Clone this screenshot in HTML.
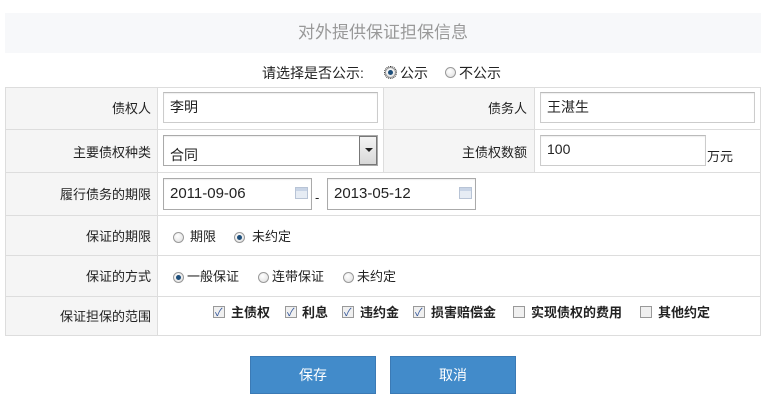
<!DOCTYPE html>
<html><head><meta charset="utf-8"><style>
*{margin:0;padding:0;box-sizing:border-box}
body{width:766px;height:405px;background:#fff;font-family:"Liberation Sans","Noto Sans CJK SC",sans-serif;font-size:13px;color:#222;position:relative;overflow:hidden}
.a{position:absolute;white-space:nowrap}
.title{left:5px;top:13px;width:756px;height:40px;background:#f7f8fa;color:#999;font-size:17px;text-align:center;line-height:40px}
.cell{position:absolute;border:1px solid #ddd}
.lab{background:#f5f5f5}
.inp{position:absolute;border:1px solid #ccc;border-top-color:#bbb;background:#fff;padding-left:6px;font-size:14px;line-height:28px;box-shadow:inset 0 1px 1px #eee}
.r{position:absolute;width:11px;height:11px;border-radius:50%;border:1px solid #999;background:radial-gradient(circle at 40% 35%,#fff,#ddd)}
.r.on::after{content:"";position:absolute;left:2px;top:2px;width:5px;height:5px;border-radius:50%;background:#1d4e7a}
.c{position:absolute;width:12px;height:12px;border:1px solid #999;background:#f0f0f0}
.c.on::after{content:"✓";position:absolute;left:1px;top:-3px;font-size:11px;color:#35579a}
.t{position:absolute;white-space:nowrap;line-height:16px}
.b{font-weight:bold}
.btn{position:absolute;top:356px;width:126px;height:38px;background:#428bca;border:1px solid #3b7ab5;color:#fff;text-align:center;line-height:36px;font-size:14px}
.cal{position:absolute;width:13px;height:12px;background:linear-gradient(#c8d4e6 0 3px,#e6ecf4 3px);border:1px solid #b8c4d6}
</style></head><body>
<div class="a title">对外提供保证担保信息</div>
<div class="t" style="left:262px;top:65px;font-size:14px">请选择是否公示:</div>
<div class="r on" style="left:385px;top:67px;outline:1px dotted #333"></div>
<div class="t" style="left:400px;top:65px;font-size:14px">公示</div>
<div class="r" style="left:445px;top:67px"></div>
<div class="t" style="left:459px;top:65px;font-size:14px">不公示</div>

<div class="cell lab" style="left:5px;top:87px;width:153px;height:249px"></div>
<div class="cell" style="left:157px;top:87px;width:604px;height:249px;border-left:none"></div>
<div class="cell lab" style="left:383px;top:87px;width:152px;height:86px"></div>
<div class="a" style="left:5px;top:129px;width:756px;height:1px;background:#ddd"></div>
<div class="a" style="left:5px;top:172px;width:756px;height:1px;background:#ddd"></div>
<div class="a" style="left:5px;top:215px;width:756px;height:1px;background:#ddd"></div>
<div class="a" style="left:5px;top:255px;width:756px;height:1px;background:#ddd"></div>
<div class="a" style="left:5px;top:296px;width:756px;height:1px;background:#ddd"></div>

<div class="t" style="right:615px;top:101px">债权人</div>
<div class="inp" style="left:163px;top:92px;width:215px;height:31px">李明</div>
<div class="t" style="right:239px;top:101px">债务人</div>
<div class="inp" style="left:540px;top:92px;width:215px;height:31px">王湛生</div>

<div class="t" style="right:615px;top:145px">主要债权种类</div>
<div class="inp" style="left:163px;top:135px;width:215px;height:31px;line-height:38px;border-color:#aaa">合同</div>
<div class="a" style="left:359px;top:136px;width:18px;height:29px;background:linear-gradient(#f4f4f4,#d8d8d8);border:1px solid #777"><div style="position:absolute;left:5px;top:11px;border-left:4px solid transparent;border-right:4px solid transparent;border-top:4px solid #222"></div></div>
<div class="t" style="right:239px;top:145px">主债权数额</div>
<div class="inp" style="left:540px;top:135px;width:166px;height:31px;line-height:26px">100</div>
<div class="t" style="left:707px;top:149px">万元</div>

<div class="t" style="right:615px;top:187px">履行债务的期限</div>
<div class="inp" style="left:163px;top:178px;width:149px;height:32px;border-color:#aaa;line-height:30px;font-size:15px">2011-09-06</div>
<div class="cal" style="left:295px;top:187px"></div>
<div class="t" style="left:315px;top:190px">-</div>
<div class="inp" style="left:327px;top:178px;width:149px;height:32px;border-color:#aaa;line-height:30px;font-size:15px">2013-05-12</div>
<div class="cal" style="left:459px;top:187px"></div>

<div class="t" style="right:615px;top:229px">保证的期限</div>
<div class="r" style="left:173px;top:232px"></div>
<div class="t" style="left:190px;top:229px">期限</div>
<div class="r on" style="left:234px;top:232px"></div>
<div class="t" style="left:252px;top:229px">未约定</div>

<div class="t" style="right:615px;top:269px">保证的方式</div>
<div class="r on" style="left:173px;top:272px"></div>
<div class="t" style="left:187px;top:269px">一般保证</div>
<div class="r" style="left:258px;top:272px"></div>
<div class="t" style="left:272px;top:269px">连带保证</div>
<div class="r" style="left:343px;top:272px"></div>
<div class="t" style="left:357px;top:269px">未约定</div>

<div class="t" style="right:615px;top:309px">保证担保的范围</div>
<div class="c on" style="left:213px;top:306px"></div><div class="t b" style="left:231px;top:305px">主债权</div>
<div class="c on" style="left:285px;top:306px"></div><div class="t b" style="left:302px;top:305px">利息</div>
<div class="c on" style="left:342px;top:306px"></div><div class="t b" style="left:360px;top:305px">违约金</div>
<div class="c on" style="left:413px;top:306px"></div><div class="t b" style="left:431px;top:305px">损害赔偿金</div>
<div class="c" style="left:513px;top:306px"></div><div class="t b" style="left:531px;top:305px">实现债权的费用</div>
<div class="c" style="left:640px;top:306px"></div><div class="t b" style="left:658px;top:305px">其他约定</div>

<div class="btn" style="left:250px">保存</div>
<div class="btn" style="left:390px">取消</div>
</body></html>
